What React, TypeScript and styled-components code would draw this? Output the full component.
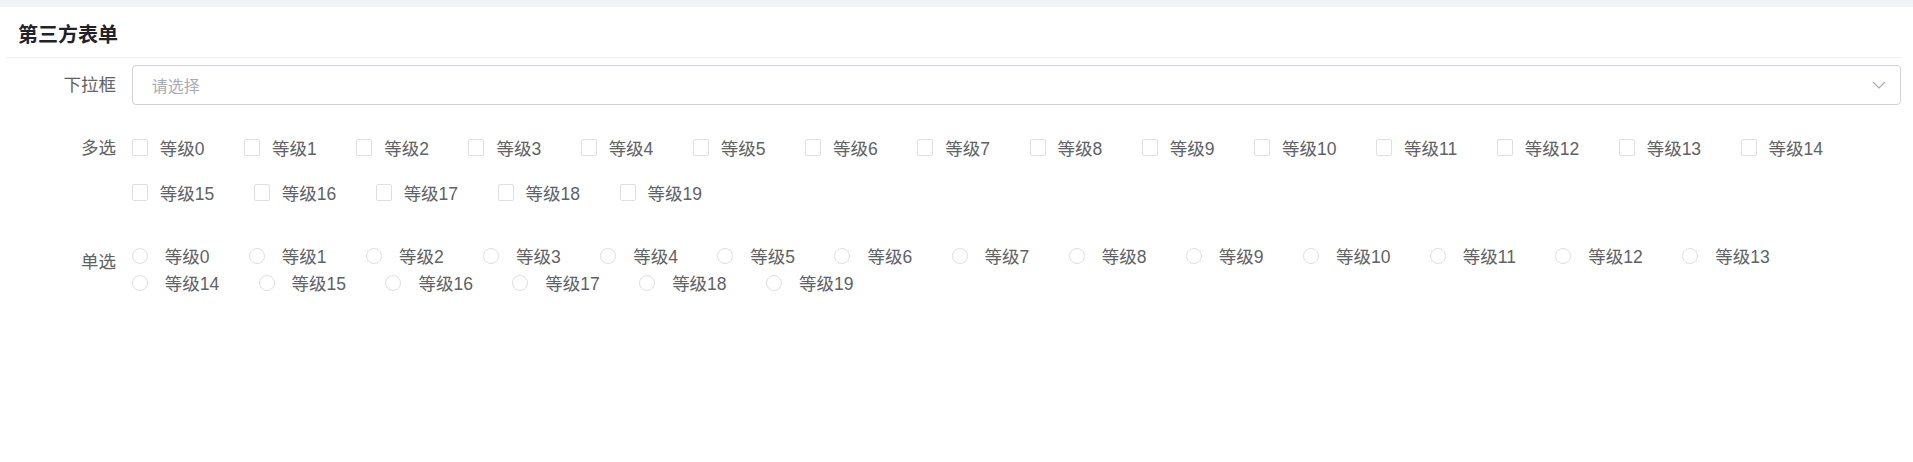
import React from "react";
import styled, { createGlobalStyle } from "styled-components";

const GlobalStyle = createGlobalStyle`
  html, body {
    margin: 0;
    padding: 0;
    background: #ffffff;
  }
  body {
    font-family: "Liberation Sans", "Noto Sans CJK SC", sans-serif;
    color: #606266;
  }
  * {
    box-sizing: border-box;
  }
`;

const levels = Array.from({ length: 20 }, (_, i) => `等级${i}`);

const TopStrip = styled.div`
  height: 7px;
  background: #f2f3f5;
`;

const Card = styled.div`
  padding: 0 12px 0 6px;
`;

const CardHeader = styled.div`
  height: 51px;
  display: flex;
  align-items: center;
  padding-left: 12px;
  border-bottom: 1px solid #ebeef5;
  font-size: 20px;
  font-weight: 700;
  color: #1f2329;
  padding-top: 2px;
`;

const Form = styled.div`
  padding-top: 7px;
  display: flex;
  flex-direction: column;
`;

const FormItem = styled.div<{ $gap: number }>`
  display: flex;
  align-items: flex-start;
  margin-bottom: ${(p) => p.$gap}px;
`;

const Label = styled.div`
  width: 125.7px;
  flex-shrink: 0;
  padding-right: 15.7px;
  text-align: right;
  line-height: 40px;
  font-size: 17.5px;
  color: #606266;
`;

const Content = styled.div`
  flex: 1;
  min-width: 0;
`;

const SelectBox = styled.div`
  height: 40px;
  border: 1px solid #cfd2d8;
  border-radius: 4px;
  display: flex;
  align-items: center;
  justify-content: space-between;
  padding: 0 14px 0 19px;
`;

const Placeholder = styled.span`
  font-size: 16px;
  color: #a8abb2;
`;

const Chevron = styled.svg`
  width: 14px;
  height: 8px;
  color: #a8abb2;
`;

const Group = styled.div<{ $rowGap: number }>`
  display: flex;
  flex-wrap: wrap;
  row-gap: ${(p) => p.$rowGap}px;
`;

const Option = styled.label<{ $height: number; $textGap: number; $space: number }>`
  display: inline-flex;
  align-items: center;
  height: ${(p) => p.$height}px;
  margin-right: ${(p) => p.$space}px;
  font-size: 17.5px;
  color: #606266;
  white-space: nowrap;
  cursor: pointer;

  span {
    margin-left: ${(p) => p.$textGap}px;
  }
`;

const Box = styled.i`
  width: 16px;
  height: 17px;
  border: 1px solid #dcdfe6;
  border-radius: 2px;
  background: #fff;
  flex-shrink: 0;
`;

const Circle = styled.i`
  width: 16px;
  height: 16px;
  border: 1px solid #dcdfe6;
  border-radius: 50%;
  background: #fff;
  flex-shrink: 0;
`;

export default function App() {
  return (
    <>
      <GlobalStyle />
      <TopStrip />
      <Card>
        <CardHeader>第三方表单</CardHeader>
        <Form>
          <FormItem $gap={23}>
            <Label>下拉框</Label>
            <Content>
              <SelectBox>
                <Placeholder>请选择</Placeholder>
                <Chevron viewBox="0 0 14 8" fill="none">
                  <path d="M1 1l6 6 6-6" stroke="currentColor" strokeWidth="1.2" />
                </Chevron>
              </SelectBox>
            </Content>
          </FormItem>
          <FormItem $gap={31}>
            <Label>多选</Label>
            <Content>
              <Group $rowGap={7}>
                {levels.map((l) => (
                  <Option key={l} $height={38} $textGap={12} $space={39.5}>
                    <Box />
                    <span>{l}</span>
                  </Option>
                ))}
              </Group>
            </Content>
          </FormItem>
          <FormItem $gap={0}>
            <Label>单选</Label>
            <Content>
              <Group $rowGap={0}>
                {levels.map((l) => (
                  <Option key={l} $height={27} $textGap={17} $space={39.4}>
                    <Circle />
                    <span>{l}</span>
                  </Option>
                ))}
              </Group>
            </Content>
          </FormItem>
        </Form>
      </Card>
    </>
  );
}
